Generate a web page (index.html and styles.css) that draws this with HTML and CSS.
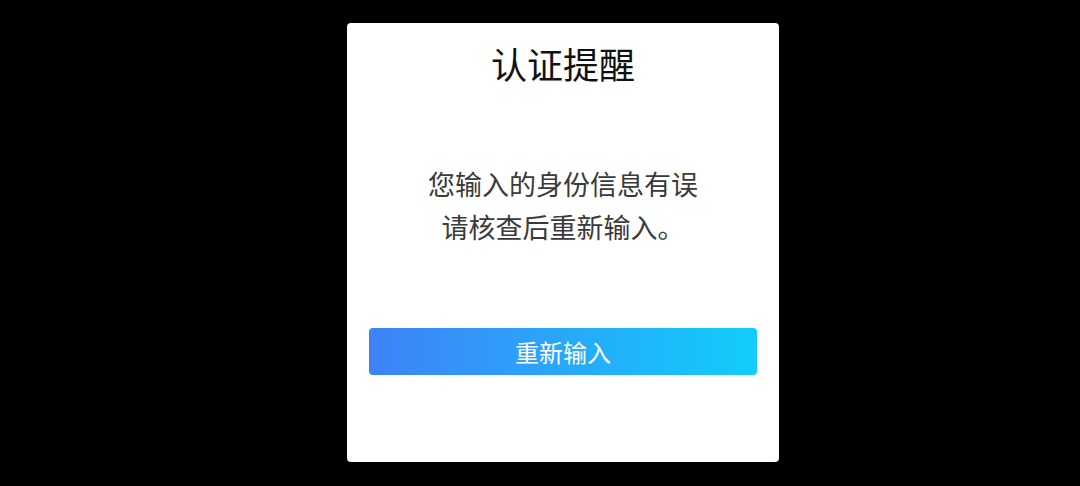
FILE: index.html
```html
<!DOCTYPE html>
<html lang="zh-CN">
<head>
<meta charset="utf-8">
<title>认证提醒</title>
<link rel="stylesheet" href="styles.css">
</head>
<body>
<div class="stage">
  <div class="dialog">
    <h1 class="title">认证提醒</h1>
    <p class="message">您输入的身份信息有误<br>请核查后重新输入。</p>
    <button class="retry" type="button">重新输入</button>
  </div>
</div>
</body>
</html>
```
FILE: styles.css
```css
html, body {
  margin: 0;
  padding: 0;
  background: #000;
  width: 1080px;
  height: 486px;
  overflow: hidden;
  font-family: "Noto Sans CJK SC", "Noto Sans", sans-serif;
}
.stage {
  display: flex;
  justify-content: flex-start;
  padding-top: 23px;
  padding-left: 347px;
}
.dialog {
  width: 432px;
  height: 439px;
  background: #fff;
  border-radius: 4px;
  display: flex;
  flex-direction: column;
  align-items: center;
  box-sizing: border-box;
}
.title {
  margin: 14px 0 0;
  font-size: 36px;
  line-height: 52px;
  font-weight: 400;
  color: #111;
}
.message {
  margin: 73px 0 0;
  font-size: 27px;
  line-height: 43px;
  color: #3a3a3a;
  text-align: center;
}
.retry {
  margin-top: 80px;
  width: 388px;
  height: 47px;
  border: none;
  border-radius: 4px;
  background: linear-gradient(90deg, #3e82f8 0%, #12cdfb 100%);
  color: #fff;
  font-family: inherit;
  font-size: 24px;
  padding: 0;
}
```
